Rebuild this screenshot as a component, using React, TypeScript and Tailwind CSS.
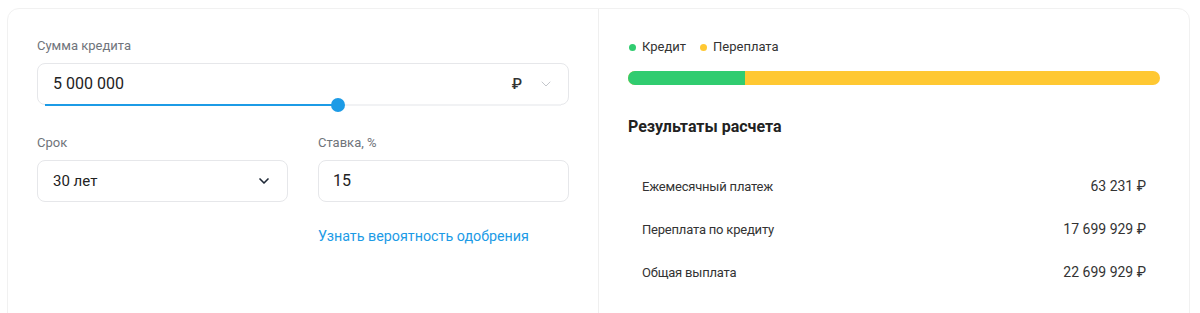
import { ChevronDown } from "lucide-react";

const rows = [
  { label: "Ежемесячный платеж", value: "63 231 ₽" },
  { label: "Переплата по кредиту", value: "17 699 929 ₽" },
  { label: "Общая выплата", value: "22 699 929 ₽" },
];

export default function App() {
  return (
    <div className="min-h-[313px] bg-white pl-[7px] pr-[10px] pt-2 font-['Roboto',sans-serif] text-[#222]">
      <div className="flex h-[320px] rounded-xl border border-[#f1f1f1]">
        {/* калькулятор */}
        <div className="w-[590px] px-[29px] pt-[29px]">
          <div className="mb-[9px] text-[13px] leading-4 text-[#6f747b]">Сумма кредита</div>
          <div className="relative flex h-[42px] items-center rounded-lg border border-[#e6e7ea] pl-[15px] pr-[14px]">
            <span className="text-[16px] text-[#222]">5 000 000</span>
            <span className="ml-auto text-[15px] font-medium text-[#333]">₽</span>
            <ChevronDown className="ml-4 h-4 w-4 text-[#c4c7cc]" strokeWidth={1.5} />
            <div className="absolute bottom-[-2px] left-[7px] right-[7px] h-[2px] bg-[#f1f2f4]">
              <div className="h-full w-[293px] bg-[#1c9be6]" />
              <div className="absolute left-[286px] top-[-6px] h-[14px] w-[14px] rounded-full bg-[#1c9be6]" />
            </div>
          </div>

          <div className="mt-[30px] grid grid-cols-2 gap-[30px]">
            <div>
              <div className="mb-[9px] text-[13px] leading-4 text-[#6f747b]">Срок</div>
              <div className="flex h-[42px] items-center rounded-lg border border-[#e6e7ea] pl-[15px] pr-[15px]">
                <span className="text-[15px]">30 лет</span>
                <ChevronDown className="ml-auto h-4 w-4 text-[#1f2937]" strokeWidth={2.5} />
              </div>
            </div>
            <div>
              <div className="mb-[9px] text-[13px] leading-4 text-[#6f747b]">Ставка, %</div>
              <div className="flex h-[42px] items-center rounded-lg border border-[#e6e7ea] pl-[14px]">
                <span className="text-[16px]">15</span>
              </div>
              <a className="mt-[25px] block text-[14.3px] leading-[18px] text-[#1c9be6]">
                Узнать вероятность одобрения
              </a>
            </div>
          </div>
        </div>

        {/* результаты */}
        <div className="flex-1 border-l border-[#efefef] px-[29px] pt-[30px]">
          <div className="flex items-center text-[13px] leading-4 text-[#333]">
            <span className="ml-[1px] h-[7px] w-[7px] rounded-full bg-[#30cc70]" />
            <span className="ml-[6px]">Кредит</span>
            <span className="ml-[14px] h-[7px] w-[7px] rounded-full bg-[#ffc832]" />
            <span className="ml-[6px]">Переплата</span>
          </div>
          <div className="mt-4 flex h-[14px] w-[532px] overflow-hidden rounded-full bg-[#ffc832]">
            <div className="h-full w-[117px] bg-[#30cc70]" />
          </div>
          <div className="mt-[32px] text-[16px] font-bold leading-5 text-[#222]">Результаты расчета</div>
          <div className="mt-[28px] w-[532px] px-[14px]">
            {rows.map((r) => (
              <div key={r.label} className="flex h-[43px] items-center text-[13px] text-[#333]">
                <span className="tracking-[-0.2px]">{r.label}</span>
                <span className="ml-auto text-[14px]">{r.value}</span>
              </div>
            ))}
          </div>
        </div>
      </div>
    </div>
  );
}
